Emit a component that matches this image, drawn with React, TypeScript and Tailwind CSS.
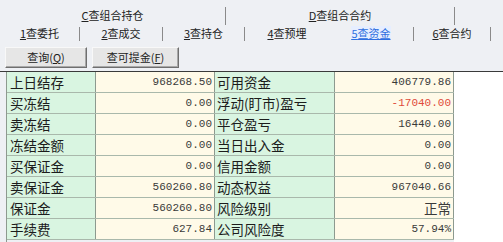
import React from "react";

const cjk = { fontFamily: '"Noto Sans CJK SC", "Noto Sans", sans-serif' };
const mono = { fontFamily: '"Liberation Mono", "DejaVu Sans Mono", monospace' };

type Row = { l1: string; v1: string; l2: string; v2: string; red?: boolean; cjkVal?: boolean };

const rows: Row[] = [
  { l1: "上日结存", v1: "968268.50", l2: "可用资金", v2: "406779.86" },
  { l1: "买冻结", v1: "0.00", l2: "浮动(盯市)盈亏", v2: "-17040.00", red: true },
  { l1: "卖冻结", v1: "0.00", l2: "平仓盈亏", v2: "16440.00" },
  { l1: "冻结金额", v1: "0.00", l2: "当日出入金", v2: "0.00" },
  { l1: "买保证金", v1: "0.00", l2: "信用金额", v2: "0.00" },
  { l1: "卖保证金", v1: "560260.80", l2: "动态权益", v2: "967040.66" },
  { l1: "保证金", v1: "560260.80", l2: "风险级别", v2: "正常", cjkVal: true },
  { l1: "手续费", v1: "627.84", l2: "公司风险度", v2: "57.94%" },
];

function Sep({ h }: { h: string }) {
  return <div className={`w-px bg-[#8a8a8a] ${h}`} />;
}

function Tab({ k, text, w, active }: { k: string; text: string; w: string; active?: boolean }) {
  return (
    <div className={`${w} flex justify-center items-center`}>
      <span className={`text-[11px] leading-[14px] ${active ? "text-[#2f6fe0] underline bg-[#e6eeff]" : "text-[#222]"}`} style={cjk}>
        <span className="underline">{k}</span>
        {text}
      </span>
    </div>
  );
}

function Btn({ label, k, w }: { label: string; k: string; w: string }) {
  return (
    <div
      className={`${w} h-[21px] flex items-center justify-center bg-[#e6e6e6] border border-t-[#f8f8f8] border-l-[#f8f8f8] border-r-[#6f6f6f] border-b-[#6f6f6f] shadow-[inset_-1px_-1px_0_#a8a8a8] text-[11px] text-[#222]`}
      style={cjk}
    >
      {label}(<span className="underline">{k}</span>)
    </div>
  );
}

export default function App() {
  return (
    <div className="w-[503px] h-[242px] overflow-hidden bg-[#eef0f4] flex flex-col">
      {/* Row 1 tabs */}
      <div className="h-[26px] flex">
        <div className="w-[225px] flex items-center justify-center pt-[4px]">
          <span className="text-[11px] leading-[14px] text-[#222]" style={cjk}>
            <span className="underline">C</span>查组合持仓
          </span>
        </div>
        <div className="pt-[7px]"><Sep h="h-[18px]" /></div>
        <div className="w-[228px] flex items-center justify-center pt-[4px]">
          <span className="text-[11px] leading-[14px] text-[#222]" style={cjk}>
            <span className="underline">D</span>查组合合约
          </span>
        </div>
        <div className="pt-[7px]"><Sep h="h-[18px]" /></div>
      </div>
      {/* Row 2 tabs */}
      <div className="h-[19px] flex items-start">
        <Tab k="1" text="查委托" w="w-[79px]" />
        <div className="pt-[1px]"><Sep h="h-[14px]" /></div>
        <Tab k="2" text="查成交" w="w-[82px]" />
        <div className="pt-[1px]"><Sep h="h-[14px]" /></div>
        <Tab k="3" text="查持仓" w="w-[81px]" />
        <div className="pt-[1px]"><Sep h="h-[14px]" /></div>
        <Tab k="4" text="查预埋" w="w-[84px]" />
        <Tab k="5" text="查资金" w="w-[84px]" active />
        <div className="pt-[1px]"><Sep h="h-[14px]" /></div>
        <Tab k="6" text="查合约" w="w-[76px]" />
        <div className="pt-[1px]"><Sep h="h-[14px]" /></div>
      </div>
      {/* Buttons */}
      <div className="mt-[2px] h-[21px] flex pl-[5px] gap-[5px]">
        <Btn label="查询" k="Q" w="w-[82px]" />
        <Btn label="查可提金" k="F" w="w-[87px]" />
      </div>
      {/* Table area */}
      <div className="mt-[3px] flex-1 flex border-t border-[#3a3a3a]">
        <div className="w-[6px]" />
        <div className="w-[448px] border-l border-[#8d9a8f] flex flex-col">
          {rows.map((r, i) => (
            <div key={i} className="h-[21px] shrink-0 flex border-b border-[#a9b8ab]">
              <div className="w-[89px] bg-[#d9f5e1] border-r border-[#8d9a8f] flex items-center pl-[3px] text-[13.5px] text-[#1c1c1c]" style={cjk}>
                {r.l1}
              </div>
              <div className="w-[119px] bg-[#fffae8] border-r border-[#8d9a8f] flex items-center justify-end pr-[2px] text-[11px] text-[#3a3a3a]" style={mono}>
                {r.v1}
              </div>
              <div className="w-[120px] bg-[#d9f5e1] border-r border-[#8d9a8f] flex items-center pl-[2px] text-[13.5px] text-[#1c1c1c] whitespace-nowrap" style={cjk}>
                {r.l2}
              </div>
              <div
                className={`w-[119px] bg-[#fffae8] border-r border-[#8d9a8f] flex items-center justify-end pr-[2px] ${r.cjkVal ? "text-[13.5px]" : "text-[11px]"} ${r.red ? "text-[#e04a3a]" : "text-[#3a3a3a]"}`}
                style={r.cjkVal ? cjk : mono}
              >
                {r.v2}
              </div>
            </div>
          ))}
        </div>
        <div className="flex-1 bg-white" />
      </div>
    </div>
  );
}
